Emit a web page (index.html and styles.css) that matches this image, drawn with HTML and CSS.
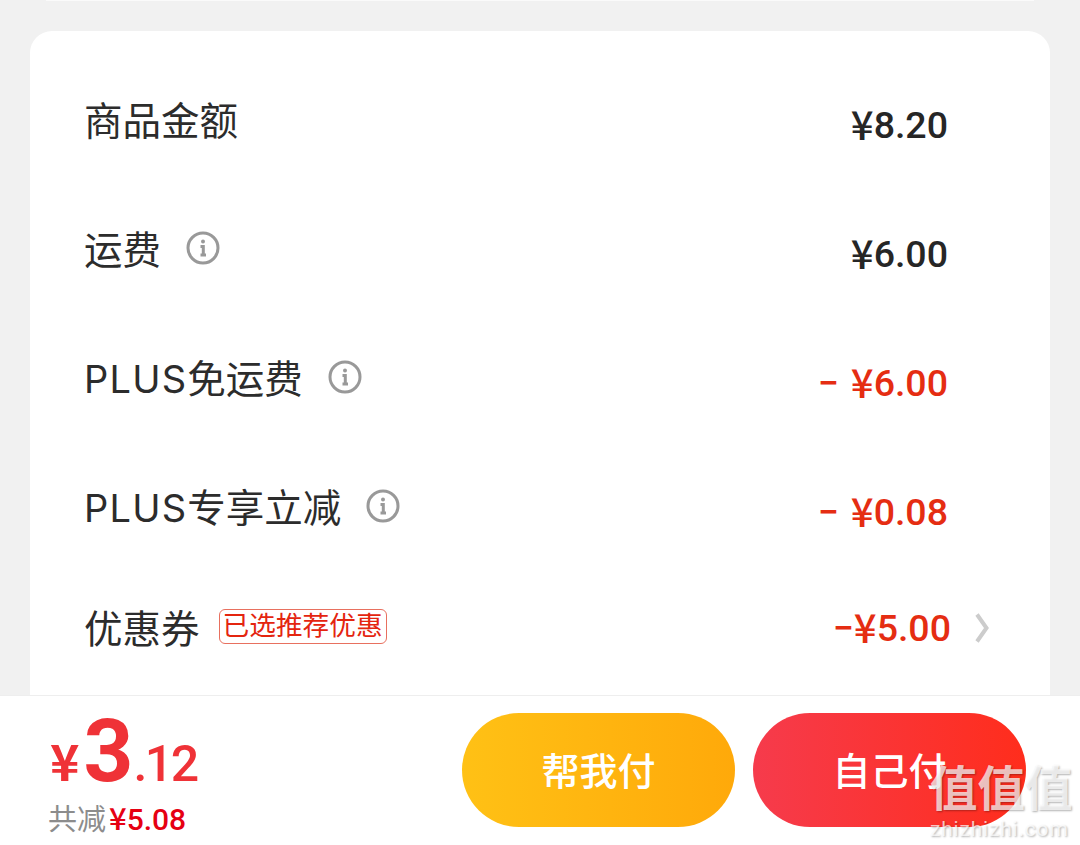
FILE: index.html
```html
<!DOCTYPE html>
<html lang="zh-CN">
<head>
  <meta charset="UTF-8">
  <title>订单结算</title>
  <link rel="stylesheet" href="styles.css">
</head>
<body>

  <div class="page">
    <main class="content">
      <div class="prev-card"></div>

      <section class="card">
        <div class="row">
          <div class="label">商品金额</div>
          <div class="amount"><span class="cny">¥</span>8.20</div>
        </div>

        <div class="row">
          <div class="label">运费
            <svg class="info" viewBox="0 0 34 34"><circle cx="17" cy="17" r="15" /><circle class="dot" cx="17" cy="10.5" r="2" /><path d="M14.5 15.5h2.8v8M14.5 24h5.5" /></svg>
          </div>
          <div class="amount"><span class="cny">¥</span>6.00</div>
        </div>

        <div class="row">
          <div class="label"><span class="latin">PLUS</span>免运费
            <svg class="info" viewBox="0 0 34 34"><circle cx="17" cy="17" r="15" /><circle class="dot" cx="17" cy="10.5" r="2" /><path d="M14.5 15.5h2.8v8M14.5 24h5.5" /></svg>
          </div>
          <div class="amount red"><span class="minus">−</span><span class="cny">¥</span>6.00</div>
        </div>

        <div class="row">
          <div class="label"><span class="latin">PLUS</span>专享立减
            <svg class="info" viewBox="0 0 34 34"><circle cx="17" cy="17" r="15" /><circle class="dot" cx="17" cy="10.5" r="2" /><path d="M14.5 15.5h2.8v8M14.5 24h5.5" /></svg>
          </div>
          <div class="amount red"><span class="minus">−</span><span class="cny">¥</span>0.08</div>
        </div>

        <div class="row row-coupon">
          <div class="label">优惠券 <span class="tag">已选推荐优惠</span></div>
          <div class="amount red">−<span class="cny">¥</span>5.00
            <svg class="arrow" viewBox="0 0 14 30"><path d="M2 1.5l9.5 13.5L2 28.5" /></svg>
          </div>
        </div>
      </section>
    </main>

    <footer class="bar">
      <div class="total">
        <div class="price"><span class="yen">¥</span><span class="big">3</span><span class="cents">.12</span></div>
        <div class="saved">共减<span class="saved-num"><span class="cny">¥</span>5.08</span></div>
      </div>
      <div class="actions">
        <button type="button" class="btn btn-yellow">帮我付</button>
        <button type="button" class="btn btn-red">自己付</button>
      </div>
    </footer>

    <div class="watermark">
      <div class="wm-logo">值值值</div>
      <div class="wm-url">zhizhizhi.com</div>
    </div>
  </div>

</body>
</html>
```

FILE: styles.css
```css
* {
  box-sizing: border-box;
}

body {
  margin: 0;
  font-family: Roboto, "Noto Sans CJK SC", sans-serif;
  background-color: #f1f1f1;
}

.page {
  position: relative;
  display: flex;
  flex-direction: column;
  height: 845px;
  overflow: hidden;
}

.content {
  flex: 1;
  min-height: 0;
  overflow: hidden;
}

.prev-card {
  height: 1px;
  margin: 0 46px 30px 46px;
  background: #fafafa;
}

.card {
  height: 700px;
  padding: 25px 102px 0 54px;
  background: #fff;
  margin: 0 30px;
  border-radius: 22px;
}

.row {
  display: flex;
  justify-content: space-between;
  align-items: center;
  height: 129px;
}

.row-coupon {
  height: 111px;
}

.label {
  display: flex;
  align-items: center;
  padding-bottom: 6px;
  font-size: 38.5px;
  color: #2c2c2c;
}

.latin {
  font-family: Inter, sans-serif;
  font-size: 38px;
  letter-spacing: 1.2px;
  transform: translateY(3px);
}

.info {
  width: 34px;
  height: 34px;
  margin-left: 25px;
  margin-top: 3px;
  fill: none;
  stroke: #999;
  stroke-width: 3;
}

.info .dot {
  fill: #999;
  stroke: none;
}

.amount {
  display: flex;
  align-items: center;
  padding-top: 8px;
  font-size: 37.5px;
  font-weight: 500;
  color: #262626;
}

.amount.red {
  color: #e52d12;
}

.cny {
  font-family: "Noto Sans CJK SC", sans-serif;
  font-size: 40px;
  font-weight: 500;
  line-height: 1;
}

.amount .cny {
  margin-bottom: 4px;
}

.minus {
  margin-right: 12px;
}

.row-coupon .label {
  padding-bottom: 4px;
}

.tag {
  margin-left: 19px;
  padding: 0 3px;
  font-size: 26.7px;
  line-height: 33px;
  color: #e4250f;
  border: 1px solid #e8705f;
  border-radius: 6px;
  transform: translateY(1px);
}

.row-coupon .amount {
  position: relative;
  right: -3px;
  padding-top: 0;
}

.arrow {
  position: absolute;
  left: 100%;
  width: 14px;
  height: 30px;
  margin-left: 24px;
  fill: none;
  stroke: #ccc;
  stroke-width: 4;
}

.bar {
  display: flex;
  justify-content: space-between;
  height: 150px;
  padding: 17px 54px 0 50px;
  background: #fff;
  border-top: 1px solid #eee;
}

.price {
  display: flex;
  align-items: baseline;
  height: 76px;
  line-height: 76px;
  color: #ef3237;
  font-weight: 700;
}

.yen {
  font-family: "Noto Sans CJK SC", sans-serif;
  font-size: 50px;
  line-height: 1;
}

.big {
  margin-left: 4px;
  font-size: 87px;
}

.cents {
  font-size: 50px;
  font-weight: 500;
  line-height: 1;
  letter-spacing: -2.5px;
}

.saved {
  margin-top: 12px;
  margin-left: -2px;
  font-size: 29px;
  line-height: 38px;
  color: #8c8c8c;
}

.saved-num {
  margin-left: 3px;
  color: #e60012;
  font-weight: 500;
  font-size: 30px;
}

.saved-num .cny {
  font-size: 31px;
}

.actions {
  display: flex;
  gap: 18px;
}

.btn {
  width: 273px;
  height: 114px;
  padding-bottom: 5px;
  border: none;
  border-radius: 57px;
  font-family: inherit;
  font-size: 38px;
  font-weight: 500;
  color: #fff;
}

.btn-yellow {
  background: linear-gradient(90deg, #ffc115, #ffa90a);
}

.btn-red {
  background: linear-gradient(90deg, #f63b4c, #ff2d1c);
}

.watermark {
  position: absolute;
  left: 930px;
  top: 763px;
  width: 143px;
  color: rgba(255, 255, 255, 0.72);
  text-shadow: 1px 1px 2px rgba(0, 0, 0, 0.3);
}

.wm-logo {
  font-size: 47.5px;
  line-height: 54px;
  font-weight: 700;
  white-space: nowrap;
}

.wm-url {
  font-size: 21px;
  line-height: 24px;
  letter-spacing: 0.8px;
  white-space: nowrap;
}
```
